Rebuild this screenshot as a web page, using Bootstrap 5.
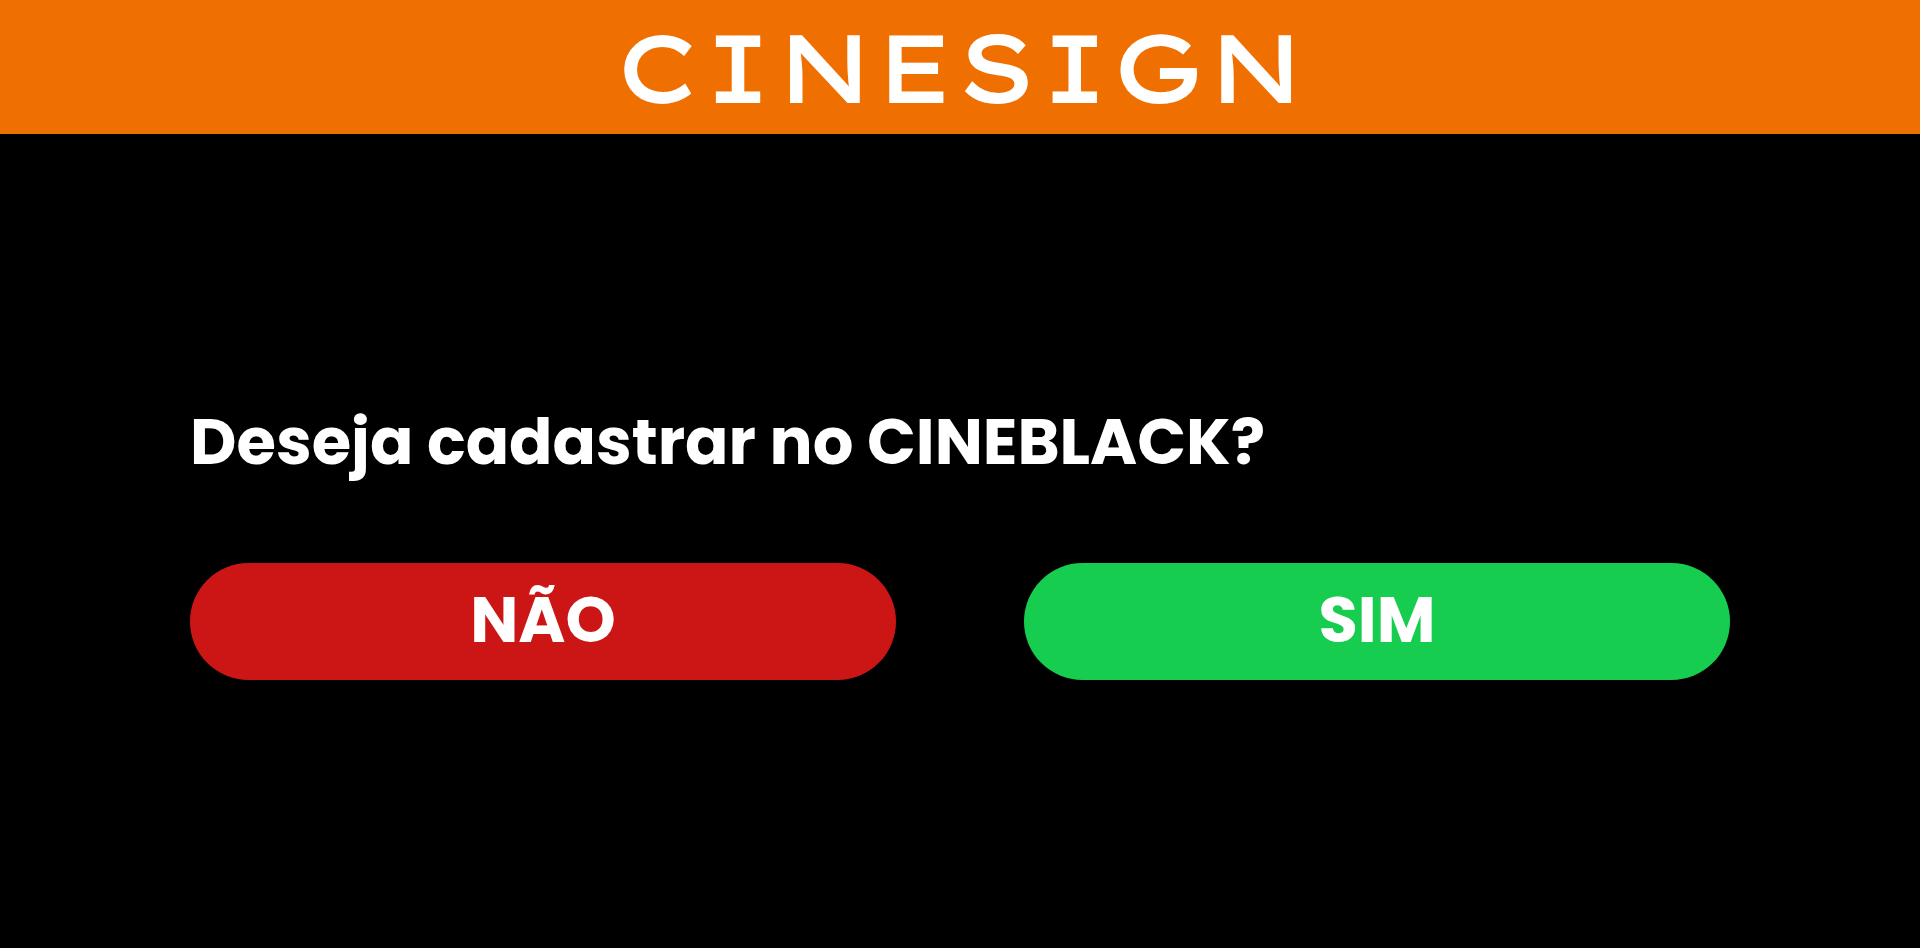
<!DOCTYPE html>
<html lang="pt-BR">
<head>
<meta charset="utf-8">
<meta name="viewport" content="width=device-width, initial-scale=1">
<title>CINESIGN</title>
<link href="https://cdn.jsdelivr.net/npm/bootstrap@5.3.0/dist/css/bootstrap.min.css" rel="stylesheet">
<style>
body { font-family: Poppins, Inter, "Liberation Sans", sans-serif; background: #000; }
.site-header { background: #ef6f00; padding: 7px; }
.wordmark { font-family: "Lexend Peta", "Lexend Mega", Inter, sans-serif; font-weight: 500; font-size: 96px; line-height: 120px; }
.question { width: 82%; max-width: 1540px; padding-bottom: 9px; }
.question-title { font-size: 64px; font-weight: 700; line-height: 96px; margin-bottom: 73px; }
.choices { --bs-gutter-x: 128px; --bs-gutter-y: 32px; }
.choice { --bs-btn-color: #fff; --bs-btn-hover-color: #fff; --bs-btn-active-color: #fff; --bs-btn-border-width: 0; font-size: 64px; font-weight: 700; line-height: 93px; padding: 10px 12px 14px; }
.choice-no { --bs-btn-bg: #cc1616; --bs-btn-hover-bg: #b51413; --bs-btn-active-bg: #a01110; }
.choice-yes { --bs-btn-bg: #17cd50; --bs-btn-hover-bg: #15b648; --bs-btn-active-bg: #129d3e; }
</style>
</head>
<body class="d-flex flex-column min-vh-100 text-white">
<header class="site-header text-center">
  <div class="wordmark">CINESIGN</div>
</header>
<main class="flex-grow-1 d-flex flex-column justify-content-center align-items-center">
  <section class="question">
    <h1 class="question-title">Deseja cadastrar no CINEBLACK?</h1>
    <div class="row choices">
      <div class="col-12 col-lg-6"><button type="button" class="btn choice choice-no rounded-pill w-100">NÃO</button></div>
      <div class="col-12 col-lg-6"><button type="button" class="btn choice choice-yes rounded-pill w-100">SIM</button></div>
    </div>
  </section>
</main>
<script src="https://cdn.jsdelivr.net/npm/bootstrap@5.3.0/dist/js/bootstrap.bundle.min.js"></script>
</body>
</html>
